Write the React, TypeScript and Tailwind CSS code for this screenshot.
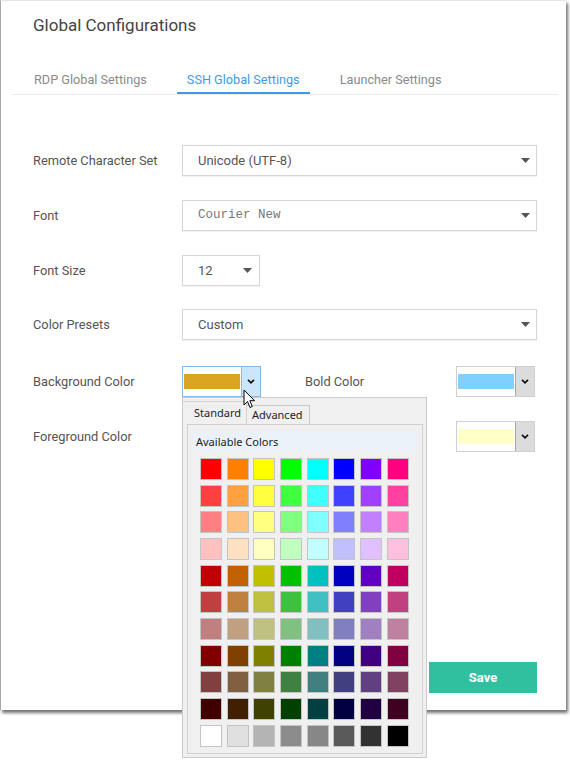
import React from "react";

const palette: string[][] = [
  ["bg-[#ff0000]", "bg-[#ff8000]", "bg-[#ffff00]", "bg-[#00ff00]", "bg-[#00ffff]", "bg-[#0000ff]", "bg-[#8000ff]", "bg-[#ff0080]"],
  ["bg-[#ff4040]", "bg-[#ffa040]", "bg-[#ffff40]", "bg-[#40ff40]", "bg-[#40ffff]", "bg-[#4040ff]", "bg-[#a040ff]", "bg-[#ff40a0]"],
  ["bg-[#ff8080]", "bg-[#ffc080]", "bg-[#ffff80]", "bg-[#80ff80]", "bg-[#80ffff]", "bg-[#8080ff]", "bg-[#c080ff]", "bg-[#ff80c0]"],
  ["bg-[#ffc0c0]", "bg-[#ffe0c0]", "bg-[#ffffc0]", "bg-[#c0ffc0]", "bg-[#c0ffff]", "bg-[#c0c0ff]", "bg-[#e0c0ff]", "bg-[#ffc0e0]"],
  ["bg-[#c00000]", "bg-[#c06000]", "bg-[#c0c000]", "bg-[#00c000]", "bg-[#00c0c0]", "bg-[#0000c0]", "bg-[#6000c0]", "bg-[#c00060]"],
  ["bg-[#c04040]", "bg-[#c08040]", "bg-[#c0c040]", "bg-[#40c040]", "bg-[#40c0c0]", "bg-[#4040c0]", "bg-[#8040c0]", "bg-[#c04080]"],
  ["bg-[#c08080]", "bg-[#c0a080]", "bg-[#c0c080]", "bg-[#80c080]", "bg-[#80c0c0]", "bg-[#8080c0]", "bg-[#a080c0]", "bg-[#c080a0]"],
  ["bg-[#800000]", "bg-[#804000]", "bg-[#808000]", "bg-[#008000]", "bg-[#008080]", "bg-[#000080]", "bg-[#400080]", "bg-[#800040]"],
  ["bg-[#804040]", "bg-[#806040]", "bg-[#808040]", "bg-[#408040]", "bg-[#408080]", "bg-[#404080]", "bg-[#604080]", "bg-[#804060]"],
  ["bg-[#400000]", "bg-[#402000]", "bg-[#404000]", "bg-[#004000]", "bg-[#004040]", "bg-[#000040]", "bg-[#200040]", "bg-[#400020]"],
  ["bg-[#ffffff]", "bg-[#e0e0e0]", "bg-[#b4b4b4]", "bg-[#8c8c8c]", "bg-[#878787]", "bg-[#5a5a5a]", "bg-[#323232]", "bg-[#000000]"],
];

function Caret() {
  return (
    <svg width="9" height="5" viewBox="0 0 9 5">
      <path d="M0 0h9L4.5 5z" fill="#555" />
    </svg>
  );
}

function Chevron() {
  return (
    <svg width="8" height="5" viewBox="0 0 8 5">
      <path d="M1 0.8l3 3 3-3" stroke="#111" strokeWidth="1.7" fill="none" />
    </svg>
  );
}

function Select({ children, className }: { children: React.ReactNode; className: string }) {
  return (
    <div
      className={`h-[31px] border border-[#d6d6d6] bg-white flex items-center justify-between pl-[15px] shadow-[0_1px_1px_rgba(0,0,0,0.05)] ${className}`}
    >
      {children}
      <Caret />
    </div>
  );
}

function ColorBox({ swatch, active }: { swatch: string; active?: boolean }) {
  return (
    <div
      className={`h-[31px] w-[79px] flex items-center bg-white border ${
        active ? "border-[#86b8e8]" : "border-[#cfcfcf]"
      }`}
    >
      <div className={`ml-[1px] h-[15px] w-[56px] ${swatch}`} />
      <div
        className={`ml-auto h-full w-[19px] flex items-center justify-center border-l ${
          active ? "bg-[#cde6f7] border-[#86b8e8]" : "bg-[#dcdcdc] border-[#a8a8a8]"
        }`}
      >
        <Chevron />
      </div>
    </div>
  );
}

export default function App() {
  return (
    <div className="relative w-[570px] h-[762px] bg-white overflow-hidden font-['Roboto',sans-serif]">
      <div className="w-[566px] h-[710px] bg-white border-l border-t border-l-[#a8a8a8] border-t-[#e4e4e4] shadow-[2px_3px_3px_rgba(0,0,0,0.55)] flex flex-col">
        <div className="pt-[14px] pl-[32px] text-[17px] leading-[20px] text-[#444]">Global Configurations</div>

        <div className="mt-[27px] ml-[10px] w-[547px] border-b border-[#ececec] pl-[13px] flex gap-[20px] text-[12.7px] leading-[16px]">
          <div className="px-[10px] pt-[10px] pb-[4px] border-b-2 border-transparent text-[#8a8a8a]">RDP Global Settings</div>
          <div className="px-[10px] pt-[10px] pb-[4px] border-b-2 border-[#3d9be9] text-[#3d9be9]">SSH Global Settings</div>
          <div className="px-[10px] pt-[10px] pb-[4px] border-b-2 border-transparent text-[#8a8a8a]">Launcher Settings</div>
        </div>

        <div className="pl-[32px] pt-[50px] flex flex-col text-[12.8px] text-[#555]">
          <div className="flex items-center h-[31px]">
            <div className="w-[149px]">Remote Character Set</div>
            <Select className="w-[355px] pr-[6px]">
              <span className="text-[13px] text-[#555]">Unicode (UTF-8)</span>
            </Select>
          </div>
          <div className="flex items-center h-[31px] mt-[24px]">
            <div className="w-[149px]">Font</div>
            <Select className="w-[355px] pr-[6px]">
              <span className="text-[12.5px] text-[#777] font-['Liberation_Mono',monospace]">Courier New</span>
            </Select>
          </div>
          <div className="flex items-center h-[31px] mt-[24px]">
            <div className="w-[149px]">Font Size</div>
            <Select className="w-[78px] pr-[7px]">
              <span className="text-[13px] text-[#555]">12</span>
            </Select>
          </div>
          <div className="flex items-center h-[31px] mt-[23px]">
            <div className="w-[149px]">Color Presets</div>
            <Select className="w-[355px] pr-[6px]">
              <span className="text-[13px] text-[#555]">Custom</span>
            </Select>
          </div>
          <div className="flex items-center h-[31px] mt-[26px]">
            <div className="w-[149px]">Background Color</div>
            <ColorBox swatch="bg-[#daa520]" active />
            <div className="ml-[44px] w-[151px]">Bold Color</div>
            <ColorBox swatch="bg-[#7fcfff]" />
          </div>
          <div className="flex items-center h-[31px] mt-[24px]">
            <div className="w-[149px]">Foreground Color</div>
            <ColorBox swatch="bg-[#ffffff]" />
            <div className="ml-[44px] w-[151px]" />
            <ColorBox swatch="bg-[#ffffc8]" />
          </div>
        </div>

        <div className="mt-auto flex justify-end pr-[29px] pb-[17px]">
          <div className="w-[108px] h-[31px] bg-[#31c09f] text-white font-bold text-[13px] flex items-center justify-center">
            Save
          </div>
        </div>
      </div>

      {/* Color picker popup */}
      <div className="absolute left-[182px] top-[397px] w-[245px] h-[361px] bg-[#f0f0f0] border border-[#cbcbcb] font-['Noto_Sans',sans-serif] text-[11px] text-[#1e1e1e]">
        <div className="flex items-end h-[26px]">
          <div className="h-[23px] w-[64px] pl-[11px] flex items-center bg-[#f0f0f0] border border-b-0 border-l-0 border-[#d4d4d4]">
            Standard
          </div>
          <div className="h-[19px] w-[63px] pl-[5px] flex items-center bg-[#f0f0f0] border border-b-0 border-l-0 border-[#c8c8c8]">
            Advanced
          </div>
        </div>
        <div className="ml-[4px] w-[236px] h-[330px] border border-[#d0d0d0] bg-[#f0f0f0] pt-[6px] pl-[5px]">
          <div className="w-[224px] h-[20px] bg-[#eaf1f9] pl-[3px] flex items-center leading-none">Available Colors</div>
          <div className="mt-[7px] ml-[7px] grid grid-cols-[repeat(8,22px)] gap-x-[4.67px] gap-y-[4.67px]">
            {palette.flat().map((c, i) => (
              <div key={i} className={`w-[22px] h-[22px] border border-[#c4c4c4] ${c}`} />
            ))}
          </div>
        </div>
      </div>

      {/* mouse cursor */}
      <svg className="absolute left-[243px] top-[389px]" width="13" height="20" viewBox="0 0 13 20">
        <path d="M1 1 L1 16 L4.5 12.5 L7 18.5 L9.3 17.5 L6.8 11.7 L11.5 11.7 Z" fill="#fff" stroke="#000" strokeWidth="1" strokeLinejoin="round" />
      </svg>
    </div>
  );
}
